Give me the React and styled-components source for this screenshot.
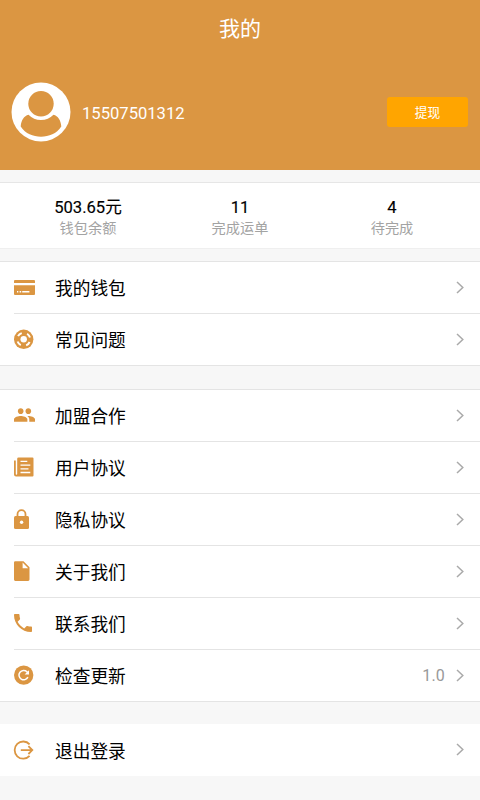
import React from "react";
import styled, { createGlobalStyle } from "styled-components";

const GlobalStyle = createGlobalStyle`
*{
    box-sizing: border-box;
}
body{
    margin: 0;
    background: #f7f7f7;
    color: #000;
    font-family: Roboto, "Noto Sans CJK SC", sans-serif;
}
`

const CardIcon = () => (
    <Icon>
        <path d="M2 4h19a1 1 0 0 1 1 1v2H1V5a1 1 0 0 1 1-1z" />
        <path d="M1 9.2h21V18a1 1 0 0 1-1 1H2a1 1 0 0 1-1-1z" />
        <path d="M4 15.7h1.3M6.6 15.7h1.6M9.2 15.7h7.2" stroke="#fff" strokeWidth="1.4" />
    </Icon>
)

const HelpIcon = () => (
    <Icon>
        <circle cx="10.7" cy="11.3" r="9.7" />
        <circle cx="10.7" cy="11.3" r="3.2" fill="#fff" />
        <circle cx="10.7" cy="11.3" r="6.5" fill="none" stroke="#fff" strokeWidth="2" strokeDasharray="4.6 5.61" strokeDashoffset="-2.8" />
    </Icon>
)

const PeopleIcon = () => (
    <Icon>
        <path transform="translate(0.05 -0.5) scale(0.955)" d="M16 11c1.66 0 2.99-1.34 2.99-3S17.66 5 16 5s-3 1.34-3 3 1.34 3 3 3zm-8 0c1.66 0 2.99-1.34 2.99-3S9.66 5 8 5 5 6.34 5 8s1.34 3 3 3zm0 2c-2.33 0-7 1.17-7 3.5V19h14v-2.5c0-2.33-4.67-3.5-7-3.5zm8 0c-.29 0-.62.02-.97.05 1.16.84 1.97 1.97 1.97 3.45V19h6v-2.5c0-2.33-4.67-3.5-7-3.5z" />
    </Icon>
)

const PaperIcon = () => (
    <Icon>
        <path d="M5.5 1.5h14a1 1 0 0 1 1 1v17a1 1 0 0 1-1 1H3a2 2 0 0 1-2-2V4.5h1.8V18a.7.7 0 0 0 1.4 0V2.8a1.3 1.3 0 0 1 1.3-1.3z" />
        <path d="M7.5 5.4h6.8M7.5 9.2h9.8M7.5 12.8h8M7.5 16.5h9.8" stroke="#fff" strokeWidth="1.3" />
    </Icon>
)

const LockIcon = () => (
    <Icon>
        <rect x="1" y="8" width="15" height="13" rx="1.5" />
        <path d="M4.5 8.5V6.2a4 4 0 0 1 8 0v2.3" fill="none" stroke="#db9642" strokeWidth="1.8" />
        <circle cx="8.6" cy="14.3" r="1.7" fill="#fff" />
    </Icon>
)

const FileIcon = () => (
    <Icon>
        <path d="M2.3 1.2h8.2l6 6v12.3a1.4 1.4 0 0 1-1.4 1.4H2.3A1.3 1.3 0 0 1 1 19.6V2.5a1.3 1.3 0 0 1 1.3-1.3z" />
        <path d="M9.6 2.6v5.6h5.6z" fill="#fff" />
    </Icon>
)

const PhoneIcon = () => (
    <Icon>
        <path transform="translate(-2 -1)" d="M6.62 10.79c1.44 2.83 3.76 5.14 6.59 6.59l2.2-2.2c.27-.27.67-.36 1.02-.24 1.12.37 2.33.57 3.57.57.55 0 1 .45 1 1V20c0 .55-.45 1-1 1-9.39 0-17-7.61-17-17 0-.55.45-1 1-1h3.5c.55 0 1 .45 1 1 0 1.25.2 2.45.57 3.57.11.35.03.74-.25 1.02l-2.2 2.2z" />
    </Icon>
)

const UpdateIcon = () => (
    <Icon>
        <circle cx="10.7" cy="11.1" r="9.7" />
        <path d="M14.9 13.2a4.7 4.7 0 1 1-1-5.5l1.3 1.5" fill="none" stroke="#fff" strokeWidth="1.5" />
        <path d="M16 6.2v4.4h-4.4z" fill="#fff" />
    </Icon>
)

const LogoutIcon = () => (
    <Icon>
        <path d="M16.6 6.3a8.6 8.6 0 1 0 0 11.6M7.8 12.1h11.3M15.4 8.2l3.9 3.9-3.9 3.9" fill="none" stroke="#db9642" strokeWidth="1.8" />
    </Icon>
)

const stats = [
    { value: "503.65元", label: "钱包余额" },
    { value: "11", label: "完成运单" },
    { value: "4", label: "待完成" },
]

const accountItems = [
    { icon: <CardIcon />, text: "我的钱包" },
    { icon: <HelpIcon />, text: "常见问题" },
]

const serviceItems = [
    { icon: <PeopleIcon />, text: "加盟合作" },
    { icon: <PaperIcon />, text: "用户协议" },
    { icon: <LockIcon />, text: "隐私协议" },
    { icon: <FileIcon />, text: "关于我们" },
    { icon: <PhoneIcon />, text: "联系我们" },
    { icon: <UpdateIcon />, text: "检查更新", note: "1.0" },
]

const MenuItem = ({ icon, text, note }) => (
    <Item>
        {icon}
        <ItemBody>
            <span>{text}</span>
            {note && <Note>{note}</Note>}
            <Chevron viewBox="0 0 8 13">
                <path d="M1 1l5.8 5.5L1 12" />
            </Chevron>
        </ItemBody>
    </Item>
)

const App = () => {
    return (
        <Page>
            <GlobalStyle />
            <Header>
                <h1>我的</h1>
                <Profile>
                    <Avatar viewBox="0 0 60 60">
                        <circle cx="30" cy="30" r="29.5" fill="#fff" />
                        <circle cx="30" cy="21.7" r="12.7" />
                        <path d="M17.5 32.7C21 36 25 38 30 38s9-2 12.5-5.3c4.5 1 7.3 5.500 7.800 11.800C45.500 51.700 38 54.700 30 54.700S14.500 51.700 9.700 44.500c.500-6.300 3.300-10.800 7.800-11.800z" />
                    </Avatar>
                    <span>15507501312</span>
                    <CashButton type="button">提现</CashButton>
                </Profile>
            </Header>
            <Stats>
                {stats.map((stat) => (
                    <Stat key={stat.label}>
                        <strong>{stat.value}</strong>
                        <span>{stat.label}</span>
                    </Stat>
                ))}
            </Stats>
            <Menu $gap="12px">
                {accountItems.map((item) => <MenuItem key={item.text} {...item} />)}
            </Menu>
            <Menu $gap="23px">
                {serviceItems.map((item) => <MenuItem key={item.text} {...item} />)}
            </Menu>
            <Menu $gap="22px" $plain>
                <MenuItem icon={<LogoutIcon />} text="退出登录" />
            </Menu>
        </Page>
    )
}

const Page = styled.main`
width: 100%;
height: 800px;
overflow: hidden;
`
const Header = styled.header`
height: 170px;
background: #db9642;
color: #fff;
h1{
    margin: 0;
    height: 56px;
    line-height: 58px;
    text-align: center;
    font-size: 21px;
    font-weight: 400;
}
`
const Profile = styled.div`
display: flex;
align-items: center;
height: 112px;
padding: 0 12px 0 11px;
> span{
    margin-left: 11px;
    padding-top: 3px;
    font-size: 16.6px;
    line-height: 20px;
}
`
const Avatar = styled.svg`
width: 60px;
height: 60px;
fill: #db9642;
`
const CashButton = styled.button`
margin-left: auto;
width: 81px;
height: 30px;
padding: 0 0 1px;
border: none;
border-radius: 3px;
background: #ffa500;
color: #fff;
font-family: inherit;
font-size: 12.7px;
`
const Stats = styled.section`
display: flex;
height: 67px;
margin-top: 12px;
padding: 14px 12px 0;
background: #fff;
border-top: 1px solid #e6e6e6;
border-bottom: 1px solid #efefef;
`
const Stat = styled.div`
display: flex;
flex: 1;
flex-direction: column;
align-items: center;
strong{
    font-size: 16.6px;
    font-weight: 400;
    line-height: 21px;
    -webkit-text-stroke: 0.15px #000;
}
span{
    color: #a3a3a3;
    font-size: 14.2px;
    line-height: 20px;
}
`
const ItemBody = styled.div`
display: flex;
flex: 1;
align-items: center;
margin-left: 19px;
font-size: 17.7px;
line-height: 26px;
> svg{
    margin-left: 11px;
}
> span:first-child{
    margin-right: auto;
    padding-top: 2px;
}
`
const Item = styled.div`
display: flex;
height: 52px;
padding: 0 16px 0 13px;
background: linear-gradient(#e4e4e4, #e4e4e4) 14px 100% / 100% 1px no-repeat;
&:last-child{
    background: none;
}
`
const Menu = styled.section`
margin-top: ${(props) => props.$gap};
background: #fff;
border-top: ${(props) => props.$plain ? "none" : "1px solid #e4e4e4"};
box-shadow: ${(props) => props.$plain ? "none" : "inset 0 -1px #e4e4e4"};
${ItemBody} > span:first-child{
    padding-top: ${(props) => props.$plain ? "4px" : "2px"};
}
`
const Icon = styled.svg`
flex: none;
width: 23px;
height: 23px;
margin-top: 14px;
fill: #db9642;
`
const Note = styled.span`
color: #999;
font-size: 16px;
letter-spacing: 0.2px;
`
const Chevron = styled.svg`
width: 8px;
height: 13px;
margin-bottom: 1px;
fill: none;
stroke: #aaa;
stroke-width: 1.5;
`

export default App;
